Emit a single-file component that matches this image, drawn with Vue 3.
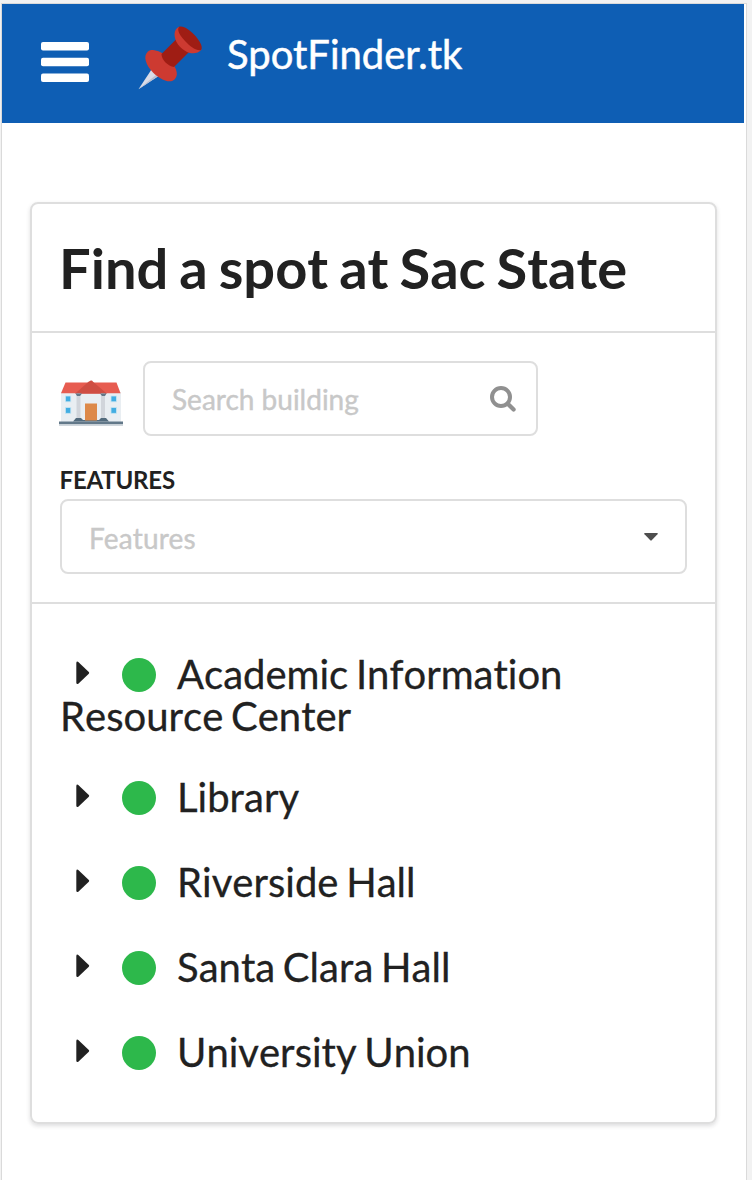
<script setup>
const buildings = [
  'Academic Information Resource Center',
  'Library',
  'Riverside Hall',
  'Santa Clara Hall',
  'University Union',
]
</script>

<template>
  <div class="frame">
    <div class="screen">
      <header class="topbar">
        <svg class="menu" viewBox="0 0 48 40" width="48" height="40">
          <rect x="0" y="0" width="48" height="8.4" rx="2" />
          <rect x="0" y="15.8" width="48" height="8.4" rx="2" />
          <rect x="0" y="31.6" width="48" height="8.4" rx="2" />
        </svg>
        <svg class="pin" viewBox="0 0 64 64" width="64" height="64">
          <path fill="#d9dce8" d="M0.5 63.2 L13.5 43.5 L20.5 50 Z" />
          <path fill="#b9bfd3" d="M0.5 63.2 L18.5 48.5 L20.5 50 Z" />
          <path fill="#cd3a31" d="M10 25.5 C15 21.5 24 26 30 32 C37 39 42 48 36.500 53.500 C31 58.500 21 52.500 15 46.500 C8 39.500 4.500 30 10 25.500 Z" />
          <path fill="#9f1d14" d="M23.500 28 L38 13.500 L51 26 L36 41 C30 40 23.500 34 23.500 28 Z" />
          <path fill="#cd3a31" d="M41 .8 C35.500 3.500 35 11 40 18.500 C46 26.500 57 31 63.500 23.500 L57 14 Z" />
          <path fill="#9f1d14" d="M41 .8 C45-1 52 4 56.500 9 C61 14 65 20 63.300 23.800 C60 26 52 20.500 47.500 15.500 C43 10.500 38.500 5 41 .8 Z" />
        </svg>
        <span class="brand">SpotFinder.tk</span>
      </header>

      <main class="card">
        <div class="heading"><h1>Find a spot at Sac State</h1></div>

        <section class="filters">
          <div class="search-row">
            <svg class="school" viewBox="0 0 64 46" width="64" height="46">
              <rect x="2" y="12" width="60" height="30" fill="#e9eef2" />
              <path fill="#e75c50" d="M6.500 2.500 H57.500 L61.500 13.300 H2 Z" />
              <path fill="#cf4e43" d="M31.800 .6 Q33.200 .2 34 1.800 L48 13.800 H16 L29.500 1.800 Z" />
              <rect x="17.500" y="13.500" width="4" height="25" fill="#d1d5db" />
              <rect x="42" y="13.500" width="4" height="25" fill="#d1d5db" />
              <path fill="#637787" d="M16.500 13.500 h6.500 l-2 2.500 h-3 Z M41 13.500 h6.500 l-1.500 2.500 h-3 Z" />
              <path fill="#536b7d" d="M14 41.500 L17 38 H22 L24 40 H40 L42 38 H47 L50 41.500 Z" />
              <rect x="26" y="23.500" width="12" height="17" fill="#dd8949" />
              <g fill="#42ade2" stroke="#c7e4f2" stroke-width=".8">
                <rect x="6.400" y="16" width="5.400" height="5.800" />
                <rect x="6.400" y="27.500" width="5.400" height="5.800" />
                <rect x="52" y="16" width="5.400" height="5.800" />
                <rect x="52" y="27.500" width="5.400" height="5.800" />
              </g>
              <rect x="0" y="41.500" width="64" height="2.800" fill="#627889" />
              <rect x="0" y="44.300" width="64" height="1.500" fill="#c5ced5" />
            </svg>
            <div class="field search">
              <span>Search building</span>
              <svg viewBox="0 0 26 26" width="26" height="26" fill="none" stroke="#909090" stroke-linecap="round">
                <circle cx="11" cy="11" r="9" stroke-width="4" />
                <path d="M18 18 L23.600 23.600" stroke-width="4.200" />
              </svg>
            </div>
          </div>
          <div class="label">Features</div>
          <div class="field select">
            <span>Features</span>
            <svg viewBox="0 0 14 8" width="14" height="8">
              <path fill="#4e4e4e" d="M.8 0 H13.200 Q14.300 .3 13.500 1.200 L7.700 7.300 Q7 8 6.300 7.300 L.5 1.200 Q-.3 .3 .8 0 Z" />
            </svg>
          </div>
        </section>

        <ul class="buildings">
          <li v-for="name in buildings" :key="name">
            <svg class="caret" viewBox="0 0 14 24" width="14" height="24">
              <path fill="#212121" d="M.3 2 Q.5 0 2.300 .9 L12.800 11 Q13.600 11.800 12.800 12.700 L2.300 22.800 Q.5 23.700 .3 21.800 Z" />
            </svg>
            <i class="dot"></i>{{ name }}
          </li>
        </ul>
      </main>
    </div>
  </div>
</template>

<style>
body {
  margin: 0;
  background: #f2f2f2;
}
</style>

<style scoped>
.frame {
  box-sizing: border-box;
  height: 1180px;
  padding: 3px 5px 0 1px;
  overflow: hidden;
  font-family: Lato, "Liberation Sans", sans-serif;
  font-variant-ligatures: none;
  color: #212121;
}
.screen {
  box-sizing: border-box;
  height: 1177px;
  border: 1px solid #dadada;
  border-bottom: 0;
  background: #fff;
}
.topbar {
  display: flex;
  align-items: flex-start;
  width: 742px;
  height: 119px;
  background: #0e5eb4;
}
.menu {
  margin: 38px 0 0 38.500px;
  fill: #fff;
}
.pin {
  margin: 22px 0 0 49.500px;
}
.brand {
  margin: 26px 0 0 25px;
  font-size: 40px;
  line-height: 48px;
  color: #fff;
  white-space: nowrap;
  -webkit-text-stroke: 0.5px #fff;
}
.card {
  box-sizing: border-box;
  width: 687px;
  height: 922px;
  margin: 79px 0 0 28px;
  border: 2px solid #dedede;
  border-radius: 8px;
  box-shadow: 0 2px 4px rgba(34, 36, 38, 0.15);
}
.heading {
  height: 127px;
  padding-left: 27px;
  border-bottom: 2px solid #dedede;
}
h1 {
  margin: 0;
  padding-top: 28px;
  font-size: 56px;
  line-height: 72px;
  font-weight: 700;
  font-kerning: none;
  word-spacing: -2.6px;
  white-space: nowrap;
}
.filters {
  box-sizing: border-box;
  height: 271px;
  padding: 27px 28px 0 27px;
  border-bottom: 2px solid #dedede;
}
.search-row {
  display: flex;
  align-items: flex-start;
  height: 76px;
}
.school {
  margin-top: 19.500px;
}
.field {
  box-sizing: border-box;
  display: flex;
  align-items: center;
  justify-content: space-between;
  height: 75px;
  padding: 3px 27px 0 27px;
  border: 2px solid #dedede;
  border-radius: 8px;
  font-size: 28px;
  line-height: 34px;
  color: #c8c8c8;
  -webkit-text-stroke: 0.4px #c8c8c8;
}
.search {
  width: 395px;
  margin: 1px 0 0 20px;
  padding: 1px 20px 0 27px;
}
.label {
  height: 28px;
  margin: 30px 0 5px 0.500px;
  font-size: 24px;
  line-height: 28px;
  font-weight: 700;
  letter-spacing: -0.2px;
  text-transform: uppercase;
}
.select {
  margin-left: 1px;
}
.select span {
  letter-spacing: 0.2px;
}
.select svg {
  margin-top: -3px;
}
.buildings {
  margin: 0;
  padding: 49px 20px 0 28px;
  list-style: none;
  font-size: 40px;
  line-height: 42px;
  font-kerning: none;
  word-spacing: -2.5px;
  -webkit-text-stroke: 0.3px #212121;
}
.buildings li {
  margin-bottom: 43px;
}
.buildings li:first-child {
  margin-bottom: 39px;
}
.caret {
  display: inline-block;
  margin: 0 32px 0 16px;
  vertical-align: 4px;
}
.dot {
  display: inline-block;
  width: 34px;
  height: 34px;
  margin-right: 21px;
  border-radius: 50%;
  background: #2db84b;
  vertical-align: -3px;
}
</style>
